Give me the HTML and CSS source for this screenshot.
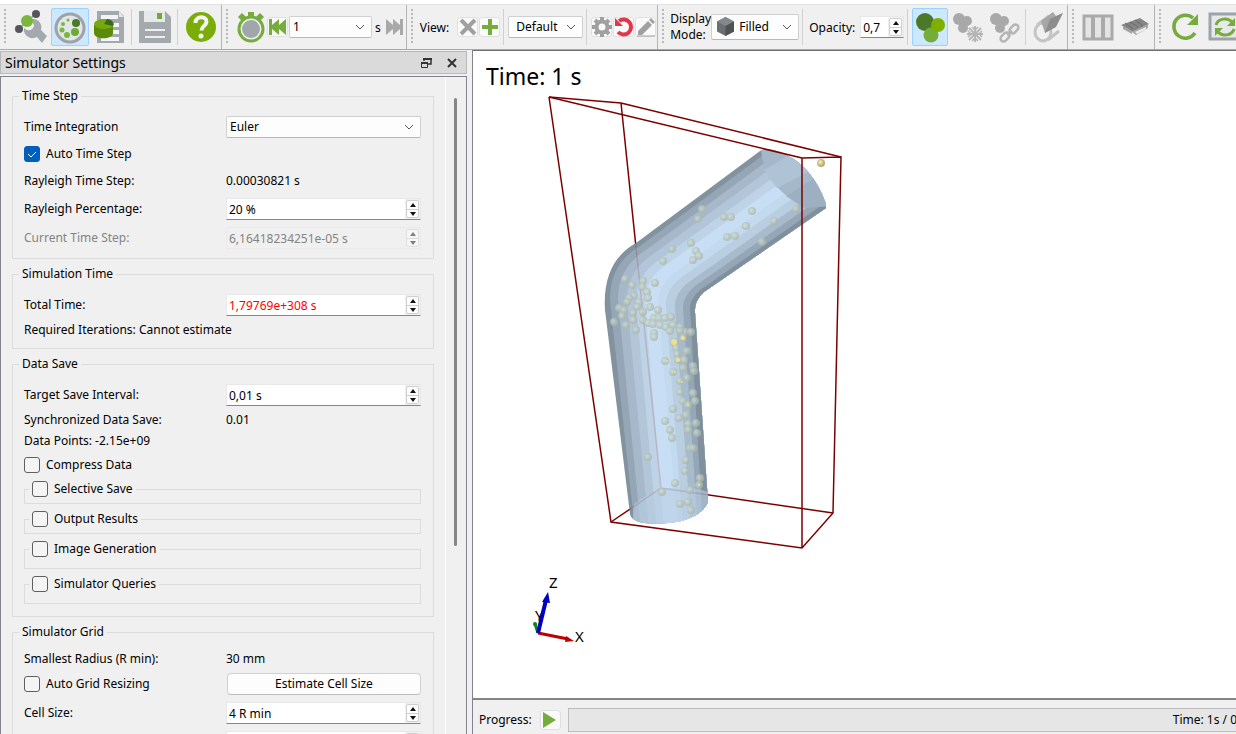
FILE: index.html
```html
<!DOCTYPE html>
<html lang="en">
<head>
    <meta charset="UTF-8">
    <meta name="viewport" content="width=device-width, initial-scale=1.0">
    <title>Simulator</title>
    <link rel="stylesheet" href="styles.css">
</head>
<body>
    <div class="menu-strip"></div>

    <header class="toolbars">
        <!-- Main tools -->
        <div class="toolbar main-tools">
            <span class="grip"></span>
            <button class="tool" aria-label="Setup">
                <svg width="34" height="34" viewBox="0 0 34 34">
                    <path d="M5 19l8-8 9-7" fill="none" stroke="#9aa0a4" stroke-width="1.5"/>
                    <path d="M10 18c-1 6 4 11 10 10l3-1 5 6 5-7-6-6c2-6-3-12-9-11l-1 1 3 5c0 4-4 6-7 5z" fill="#a3a9ad"/>
                    <circle cx="13" cy="11" r="6" fill="#7ab73c"/>
                    <circle cx="22" cy="4" r="4" fill="#55555c"/>
                    <circle cx="5" cy="19" r="4" fill="#55555c"/>
                </svg>
            </button>
            <button class="tool active" aria-label="Simulator">
                <svg width="34" height="34" viewBox="0 0 34 34">
                    <circle cx="17" cy="18" r="14" fill="#e3e6e8" stroke="#9da3a7" stroke-width="3"/>
                    <circle cx="23" cy="13" r="4" fill="#4a7a29"/>
                    <circle cx="22" cy="22" r="4" fill="#6dab35"/>
                    <circle cx="14" cy="25" r="3" fill="#7ab73c"/>
                    <circle cx="9" cy="20" r="2.5" fill="#7ab73c"/>
                    <circle cx="10" cy="14" r="2" fill="#7ab73c"/>
                    <circle cx="15" cy="10" r="1.5" fill="#7ab73c"/>
                </svg>
            </button>
            <button class="tool" aria-label="Data">
                <svg width="34" height="34" viewBox="0 0 34 34">
                    <path d="M5 1h22l5 5v27H5z" fill="#a3a9ad"/>
                    <path d="M27 1v6h5z" fill="#e4e6e7"/>
                    <path d="M9 7h17M21 15h6M21 22h6M9 29h18" stroke="#f4f4f4" stroke-width="4"/>
                    <path d="M2 15v8c0 7 19 7 19 0v-8z" fill="#5a8c0a"/>
                    <ellipse cx="12" cy="14" rx="10" ry="5" fill="#77a812"/>
                    <path d="M12 14l3-5c4 0 7 3 6 7z" fill="#3d661e"/>
                </svg>
            </button>
            <span class="sep"></span>
            <button class="tool" aria-label="Save">
                <svg width="34" height="34" viewBox="0 0 34 34">
                    <path d="M1 1h26l6 6v26H1z" fill="#a3a9ad"/>
                    <path d="M6 1h21v11H6z" fill="#e6e8e9"/>
                    <path d="M19 3h5v6h-5z" fill="#6dab35"/>
                    <path d="M7 20h20M7 27h20" stroke="#eee" stroke-width="2"/>
                </svg>
            </button>
            <span class="sep"></span>
            <button class="tool" aria-label="Help">
                <svg width="34" height="34" viewBox="0 0 34 34">
                    <circle cx="17" cy="17" r="15" fill="#7aad07"/>
                    <path d="M11.500 13c0-8 12-7 11-1-.5 4-5 4-5 8.500" fill="none" stroke="#f5f5f5" stroke-width="4"/>
                    <circle cx="17" cy="26" r="2.500" fill="#f5f5f5"/>
                </svg>
            </button>
        </div>

        <!-- Time -->
        <div class="toolbar">
            <span class="grip"></span>
            <svg class="timer" width="30" height="34" viewBox="0 0 30 34">
                <circle cx="15" cy="19" r="12" fill="#eee" stroke="#76ac3b" stroke-width="3"/>
                <circle cx="15" cy="19" r="9" fill="#a0a7ab"/>
                <path d="M12 2h6v5h-6zM2 7l4-4 4 4-4 4zM20 7l4-4 4 4-4 4z" fill="#76ac3b"/>
            </svg>
            <button class="mini" aria-label="First">
                <svg width="18" height="18" viewBox="0 0 18 18"><path d="M0 1h3v6l7-6v6l7-6v16l-7-6v6l-7-6v6H0z" fill="#76ac3b"/></svg>
            </button>
            <select class="combo time-combo" aria-label="Time"><option>1</option></select>
            <span class="unit">s</span>
            <button class="mini plain" aria-label="Last">
                <svg width="18" height="18" viewBox="0 0 18 18"><path d="M18 1h-3v6L8 1v6L1 1v16l7-6v6l7-6v6h3z" fill="#a9a9a9"/></svg>
            </button>
        </div>

        <!-- View -->
        <div class="toolbar">
            <span class="grip"></span>
            <label class="view-label" for="view">View:</label>
            <button class="mini" aria-label="Remove view">
                <svg width="18" height="18" viewBox="0 0 18 18"><path d="M2 2l14 14M16 2L2 16" stroke="#a0a0a0" stroke-width="4"/></svg>
            </button>
            <button class="mini" aria-label="Add view">
                <svg width="18" height="18" viewBox="0 0 18 18"><path d="M9 1v16M1 9h16" stroke="#76ac3b" stroke-width="4"/></svg>
            </button>
            <span class="sep"></span>
            <select class="combo view-combo" id="view"><option>Default</option></select>
            <span class="sep"></span>
            <button class="mini" aria-label="Configure">
                <svg width="20" height="20" viewBox="0 0 20 20">
                    <circle cx="10" cy="10" r="5.500" fill="none" stroke="#a0a0a0" stroke-width="4"/>
                    <path d="M10 0v4M10 16v4M0 10h4M16 10h4M3 3l3 3M14 14l3 3M3 17l3-3M14 6l3-3" stroke="#a0a0a0" stroke-width="4"/>
                </svg>
            </button>
            <button class="mini" aria-label="Reset">
                <svg width="20" height="20" viewBox="0 0 20 20"><path d="M5 4a7.500 7.500 0 1 1-1 11" fill="none" stroke="#e4364b" stroke-width="4"/><path d="M1 1v8h8z" fill="#e4364b"/></svg>
            </button>
            <button class="mini" aria-label="Edit">
                <svg width="20" height="20" viewBox="0 0 20 20"><path d="M2 14l10-10 4 4-10 10H2zM13 3l2-2 4 4-2 2z" fill="#a0a0a0"/><path d="M1 19h18" stroke="#a0a0a0"/></svg>
            </button>
        </div>

        <!-- Display -->
        <div class="toolbar">
            <span class="grip"></span>
            <label class="mode-label" for="mode">Display Mode:</label>
            <div class="mode-field">
                <svg width="17" height="19" viewBox="0 0 17 19">
                    <path d="M8.500 0L17 4.500v10L8.500 19 0 14.500v-10z" fill="#6b6f73"/>
                    <path d="M8.500 0L17 4.500 8.500 9 0 4.500z" fill="#85898c"/>
                    <path d="M17 4.500v10L8.500 19V9z" fill="#4f5255"/>
                </svg>
                <select class="combo mode-combo" id="mode"><option>Filled</option></select>
            </div>
            <span class="sep"></span>
            <label class="opacity-label" for="opacity">Opacity:</label>
            <div class="spin spin-small">
                <input id="opacity" type="text" value="0,7">
                <div class="arrows"><button aria-label="Up"></button><button aria-label="Down"></button></div>
            </div>
            <span class="sep"></span>
            <button class="tool active" aria-label="Show particles">
                <svg width="32" height="32" viewBox="0 0 32 32">
                    <circle cx="11" cy="11" r="9" fill="#4a7a29"/>
                    <circle cx="17" cy="24" r="7.500" fill="#76ac3b"/>
                    <circle cx="24" cy="14" r="7" fill="#7fb000"/>
                </svg>
            </button>
            <button class="tool" aria-label="Freeze particles">
                <svg width="32" height="32" viewBox="0 0 32 32">
                    <g fill="#a9a9a9"><circle cx="8" cy="8" r="6"/><circle cx="16" cy="10" r="5"/><circle cx="12" cy="17" r="5"/></g>
                    <path d="M24 15v16M16 23h16M18 17l12 12M30 17L18 29" stroke="#b5b5b5" stroke-width="2"/>
                    <path d="M21 16l3 3 3-3M21 30l3-3 3 3M17 20l3 3-3 3M31 20l-3 3 3 3" fill="none" stroke="#b5b5b5" stroke-width="1.500"/>
                </svg>
            </button>
            <button class="tool" aria-label="Link particles">
                <svg width="32" height="32" viewBox="0 0 32 32">
                    <g fill="#a9a9a9"><circle cx="8" cy="8" r="6"/><circle cx="16" cy="10" r="5"/><circle cx="12" cy="17" r="5"/></g>
                    <g fill="none" stroke="#b5b5b5" stroke-width="2.500">
                        <rect x="23" y="13" width="6" height="10" rx="3" transform="rotate(45 26 18)"/>
                        <rect x="14" y="21" width="6" height="10" rx="3" transform="rotate(45 17 26)"/>
                        <path d="M19 24l5-4"/>
                    </g>
                </svg>
            </button>
            <span class="sep"></span>
            <button class="tool" aria-label="Geometry">
                <svg width="32" height="32" viewBox="0 0 32 32">
                    <g fill="none" stroke="#c4c4c4" stroke-width="3">
                        <ellipse cx="11" cy="21" rx="8" ry="9"/>
                        <path d="M5 14l12-9M16 29l11-9"/>
                    </g>
                    <path d="M9 10l12-9 3 4 7-3-11 14-7 6z" fill="#a6a6a6"/>
                    <path d="M13 22l5-14 13-6-7 14z" fill="#8d8d8d"/>
                </svg>
            </button>
        </div>

        <!-- Windows -->
        <div class="toolbar">
            <span class="grip"></span>
            <button class="tool" aria-label="Columns">
                <svg width="32" height="32" viewBox="0 0 32 32">
                    <path d="M2 5h28v23H2z" fill="#e4e4e4" stroke="#aaa" stroke-width="3"/>
                    <path d="M11 4v24M21 4v24" stroke="#aaa" stroke-width="4"/>
                </svg>
            </button>
            <button class="tool" aria-label="Clip">
                <svg width="32" height="32" viewBox="0 0 32 32">
                    <path d="M2 14l19-7 9 6-17 8z" fill="#858585"/>
                    <path d="M4 18v-3l9 5v3zM13 21l16-8v4l-12 7z" fill="#a5a5a5"/>
                    <path d="M6 12l8 6M11 11l8 5M16 9l8 6" stroke="#696969"/>
                    <path d="M16 21l11-5v2l-9 5z" fill="#eee"/>
                </svg>
            </button>
        </div>

        <!-- Refresh -->
        <div class="toolbar">
            <span class="grip"></span>
            <button class="tool" aria-label="Refresh">
                <svg width="32" height="32" viewBox="0 0 32 32">
                    <path d="M24 7A11.500 11.500 0 1 0 26 22" fill="none" stroke="#76ac3b" stroke-width="3.500"/>
                    <path d="M29 3v11H18z" fill="#76ac3b"/>
                </svg>
            </button>
            <button class="tool" aria-label="Auto refresh">
                <svg width="34" height="32" viewBox="0 0 34 32">
                    <rect x="5" y="3" width="34" height="25" fill="#e6e8e9" stroke="#9da3a7" stroke-width="3"/>
                    <path d="M11 14c2-7 12-8 17-2M29 18c-2 7-12 8-17 2" fill="none" stroke="#76ac3b" stroke-width="3"/>
                    <path d="M30 7v8h-8zM10 25v-8h8z" fill="#76ac3b"/>
                </svg>
            </button>
        </div>
    </header>

    <main class="workspace">
        <aside class="dock">
            <div class="dock-title">
                <h1>Simulator Settings</h1>
                <button aria-label="Float">
                    <svg width="12" height="12" viewBox="0 0 12 12"><path d="M4 4V2h7v5H8" fill="none" stroke="#333" stroke-width="1.500"/><path d="M3 1h9v2H3zM1 5h7v2H1z" fill="#333"/><path d="M1.500 5.500h6v5h-6z" fill="none" stroke="#333"/></svg>
                </button>
                <button aria-label="Close">
                    <svg width="12" height="12" viewBox="0 0 12 12"><path d="M2 2l8 8M10 2l-8 8" stroke="#333" stroke-width="2"/></svg>
                </button>
            </div>

            <div class="dock-body">
                <form class="settings">
                    <fieldset class="group">
                        <legend>Time Step</legend>
                        <div class="row">
                            <label for="integration">Time Integration</label>
                            <select class="combo" id="integration"><option>Euler</option></select>
                        </div>
                        <div class="row">
                            <label class="check"><input type="checkbox" checked>Auto Time Step</label>
                        </div>
                        <div class="row">
                            <span>Rayleigh Time Step:</span>
                            <span>0.00030821 s</span>
                        </div>
                        <div class="row row-spin">
                            <label for="percentage">Rayleigh Percentage:</label>
                            <div class="spin">
                                <input id="percentage" type="text" value="20 %">
                                <div class="arrows"><button type="button" aria-label="Up"></button><button type="button" aria-label="Down"></button></div>
                            </div>
                        </div>
                        <div class="row row-spin disabled">
                            <label for="current">Current Time Step:</label>
                            <div class="spin">
                                <input id="current" type="text" value="6,16418234251e-05 s" disabled>
                                <div class="arrows"><button type="button" aria-label="Up" disabled></button><button type="button" aria-label="Down" disabled></button></div>
                            </div>
                        </div>
                    </fieldset>

                    <fieldset class="group">
                        <legend>Simulation Time</legend>
                        <div class="row row-spin">
                            <label for="total">Total Time:</label>
                            <div class="spin">
                                <input class="invalid" id="total" type="text" value="1,79769e+308 s">
                                <div class="arrows"><button type="button" aria-label="Up"></button><button type="button" aria-label="Down"></button></div>
                            </div>
                        </div>
                        <p>Required Iterations: Cannot estimate</p>
                    </fieldset>

                    <fieldset class="group">
                        <legend>Data Save</legend>
                        <div class="row row-spin">
                            <label for="interval">Target Save Interval:</label>
                            <div class="spin">
                                <input id="interval" type="text" value="0,01 s">
                                <div class="arrows"><button type="button" aria-label="Up"></button><button type="button" aria-label="Down"></button></div>
                            </div>
                        </div>
                        <div class="row row-text">
                            <span>Synchronized Data Save:</span>
                            <span>0.01</span>
                        </div>
                        <p>Data Points: -2.15e+09</p>
                        <div class="row">
                            <label class="check"><input type="checkbox">Compress Data</label>
                        </div>
                        <div class="subgroups">
                            <fieldset class="subgroup">
                                <legend><label class="check"><input type="checkbox">Selective Save</label></legend>
                            </fieldset>
                            <fieldset class="subgroup">
                                <legend><label class="check"><input type="checkbox">Output Results</label></legend>
                            </fieldset>
                            <fieldset class="subgroup tall">
                                <legend><label class="check"><input type="checkbox">Image Generation</label></legend>
                            </fieldset>
                            <fieldset class="subgroup tall">
                                <legend><label class="check"><input type="checkbox">Simulator Queries</label></legend>
                            </fieldset>
                        </div>
                    </fieldset>

                    <fieldset class="group">
                        <legend>Simulator Grid</legend>
                        <div class="row row-text">
                            <span>Smallest Radius (R min):</span>
                            <span>30 mm</span>
                        </div>
                        <div class="row row-spin">
                            <label class="check"><input type="checkbox">Auto Grid Resizing</label>
                            <button class="push" type="button">Estimate Cell Size</button>
                        </div>
                        <div class="row row-spin">
                            <label for="cell">Cell Size:</label>
                            <div class="spin">
                                <input id="cell" type="text" value="4 R min">
                                <div class="arrows"><button type="button" aria-label="Up"></button><button type="button" aria-label="Down"></button></div>
                            </div>
                        </div>
                        <div class="row row-spin">
                            <span></span>
                            <div class="spin">
                                <input type="text" aria-label="Cell size value">
                                <div class="arrows"><button type="button" aria-label="Up"></button><button type="button" aria-label="Down"></button></div>
                            </div>
                        </div>
                    </fieldset>
                </form>
                <div class="scrollbar"><div class="thumb"></div></div>
            </div>
        </aside>

        <section class="view">
            <div class="canvas">
                <span class="time">Time: 1 s</span>
                <svg class="scene" width="407" height="640" viewBox="473 52 407 640">
                    <defs>
                        <clipPath id="pipe">
                            <path d="M630 514L605 310Q602 262 636 243L760 151Q768 147 780 152Q812 164 826 204V208L704 292Q694 301 695 312L708 502Q700 520 668 523Q632 526 630 514Z"/>
                        </clipPath>
                        <radialGradient id="ball" cx="40%" cy="40%">
                            <stop offset="0" stop-color="#d3e0d6"/>
                            <stop offset="1" stop-color="#abb9ae"/>
                        </radialGradient>
                        <radialGradient id="gold" cx="40%" cy="40%">
                            <stop offset="0" stop-color="#f7f3c0"/>
                            <stop offset="1" stop-color="#b5ad72"/>
                        </radialGradient>
                        <circle id="p" r="4"/>
                    </defs>

                    <!-- Domain edges behind the pipe -->
                    <path class="edge" d="M621 103L661 488L611 522M661 488L833 513M549 97L621 103L841 157"/>

                    <!-- Pipe surface, one facet per path from left to right -->
                    <g clip-path="url(#pipe)">
                        <path fill="#82929f" d="M590 130H900V540H590Z"/>
                        <path fill="#95a6b6" d="M635 530L610 301Q609 264 640 246L766 153H900V540Z"/>
                        <path fill="#a6b8c9" d="M641 530L618 301Q617 268 646 250L771 158H900V540Z"/>
                        <path fill="#b3c6d9" d="M649 530L627 302Q626 272 652 255L777 164H900V540Z"/>
                        <path fill="#bfd3e7" d="M657 530L636 303Q635 276 659 260L784 170H900V540Z"/>
                        <path fill="#c8def4" d="M664 530L645 304Q644 280 666 265L790 176H900V540Z"/>
                        <path fill="#c3d9ee" d="M678 530L658 306Q657 284 677 271L801 182H900V540Z"/>
                        <path fill="#bacee2" d="M683 530L666 307Q665 289 682 277L806 189H900V540Z"/>
                        <path fill="#a8bbcd" d="M691 530L675 308Q674 293 689 282L812 195H900V540Z"/>
                        <path fill="#95a7b7" d="M698 530L683 309Q682 297 695 286L818 200H900V540Z"/>
                        <path fill="#81909d" d="M703 530L690 309Q689 300 700 290L822 205H900V540Z"/>
                        <path fill="#a5b8ca" d="M761 150Q763 174 780 190Q798 208 826 206V140H762Z"/>
                        <path fill="#afc3d6" d="M764 170L795 152L812 170L777 188Z"/>
                        <path fill="#9db0c2" d="M786 196L820 175L830 206L804 208Z"/>
                        <path fill="#b9cfe4" opacity=".6" d="M634 504Q668 478 708 492V530H632Z"/>
                        <path class="edge faint" d="M621 103L661 488L611 522M661 488L833 513"/>
                    </g>

                    <!-- Particles -->
                    <g fill="url(#ball)" opacity=".75">
                        <use href="#p" x="702" y="209"/><use href="#p" x="698" y="219"/><use href="#p" x="724" y="217"/><use href="#p" x="731" y="217"/>
                        <use href="#p" x="752" y="211"/><use href="#p" x="746" y="226"/><use href="#p" x="796" y="209"/><use href="#p" x="774" y="221"/>
                        <use href="#p" x="727" y="237"/><use href="#p" x="735" y="236"/><use href="#p" x="762" y="242"/><use href="#p" x="691" y="243"/>
                        <use href="#p" x="672" y="249"/><use href="#p" x="696" y="251"/><use href="#p" x="699" y="256"/><use href="#p" x="693" y="260"/>
                        <use href="#p" x="663" y="261"/><use href="#p" x="625" y="279"/><use href="#p" x="632" y="285"/><use href="#p" x="643" y="281"/>
                        <use href="#p" x="655" y="283"/><use href="#p" x="642" y="287"/><use href="#p" x="647" y="292"/><use href="#p" x="648" y="298"/>
                        <use href="#p" x="634" y="296"/><use href="#p" x="629" y="298"/><use href="#p" x="627" y="302"/><use href="#p" x="639" y="302"/>
                        <use href="#p" x="619" y="308"/><use href="#p" x="624" y="310"/><use href="#p" x="637" y="307"/><use href="#p" x="650" y="307"/>
                        <use href="#p" x="658" y="310"/><use href="#p" x="622" y="316"/><use href="#p" x="633" y="313"/><use href="#p" x="643" y="312"/>
                        <use href="#p" x="654" y="318"/><use href="#p" x="659" y="318"/><use href="#p" x="665" y="318"/><use href="#p" x="671" y="317"/>
                        <use href="#p" x="614" y="322"/><use href="#p" x="633" y="320"/><use href="#p" x="643" y="320"/><use href="#p" x="648" y="323"/>
                        <use href="#p" x="653" y="324"/><use href="#p" x="660" y="325"/><use href="#p" x="673" y="325"/><use href="#p" x="626" y="325"/>
                        <use href="#p" x="666" y="327"/><use href="#p" x="680" y="327"/><use href="#p" x="636" y="330"/><use href="#p" x="654" y="333"/>
                        <use href="#p" x="654" y="337"/><use href="#p" x="670" y="331"/><use href="#p" x="685" y="332"/><use href="#p" x="691" y="332"/>
                        <use href="#p" x="680" y="331"/><use href="#p" x="674" y="342"/><use href="#p" x="683" y="338"/><use href="#p" x="676" y="348"/>
                        <use href="#p" x="687" y="351"/><use href="#p" x="677" y="354"/><use href="#p" x="665" y="361"/><use href="#p" x="678" y="360"/>
                        <use href="#p" x="684" y="360"/><use href="#p" x="683" y="368"/><use href="#p" x="693" y="366"/><use href="#p" x="673" y="372"/>
                        <use href="#p" x="694" y="371"/><use href="#p" x="687" y="378"/><use href="#p" x="680" y="381"/><use href="#p" x="680" y="392"/>
                        <use href="#p" x="693" y="393"/><use href="#p" x="683" y="401"/><use href="#p" x="695" y="401"/><use href="#p" x="688" y="405"/>
                        <use href="#p" x="673" y="409"/><use href="#p" x="686" y="415"/><use href="#p" x="679" y="418"/><use href="#p" x="665" y="421"/>
                        <use href="#p" x="688" y="424"/><use href="#p" x="696" y="423"/><use href="#p" x="688" y="430"/><use href="#p" x="670" y="430"/>
                        <use href="#p" x="697" y="433"/><use href="#p" x="672" y="438"/><use href="#p" x="690" y="448"/><use href="#p" x="693" y="448"/>
                        <use href="#p" x="648" y="457"/><use href="#p" x="686" y="460"/><use href="#p" x="685" y="471"/><use href="#p" x="700" y="478"/>
                        <use href="#p" x="675" y="483"/><use href="#p" x="699" y="485"/><use href="#p" x="690" y="490"/><use href="#p" x="662" y="492"/>
                        <use href="#p" x="680" y="504"/><use href="#p" x="688" y="502"/><use href="#p" x="691" y="510"/>
                    </g>
                    <use href="#p" x="821" y="163" fill="url(#gold)"/>
                    <g fill="#efdf86">
                        <circle cx="674" cy="342" r="3"/><circle cx="683" cy="338" r="2"/><circle cx="678" cy="360" r="2"/>
                        <circle cx="667" cy="361" r="1"/><circle cx="675" cy="372" r="1"/><circle cx="682" cy="382" r="1"/>
                        <circle cx="688" cy="405" r="1"/><circle cx="699" cy="485" r="1"/>
                    </g>

                    <!-- Domain edges in front -->
                    <path class="edge" d="M549 97L802 158L841 157L833 513L802 548L611 522L549 97M802 158V548"/>

                    <!-- Axis triad -->
                    <text x="535" y="621">Y</text>
                    <path d="M538 633L535 624" stroke="#0a8a1e" stroke-width="3"/>
                    <circle cx="535" cy="624" r="2" fill="#0a8a1e"/>
                    <path d="M538 633L568 639" stroke="#c00000" stroke-width="3"/>
                    <path d="M566 636L574 641L565 642Z" fill="#c00000"/>
                    <path d="M538 633L546 600" stroke="#0000c4" stroke-width="4"/>
                    <path d="M548 592L550 603L542 602Z" fill="#0000c4"/>
                    <text x="549" y="588">Z</text>
                    <text x="575" y="642">X</text>
                </svg>
            </div>

            <footer class="progress-row">
                <span>Progress:</span>
                <button class="mini play" aria-label="Play">
                    <svg width="18" height="18" viewBox="0 0 18 18"><path d="M2 1l13 8-13 8z" fill="#76ac3b"/></svg>
                </button>
                <div class="progress" role="progressbar" aria-label="Progress"><span>Time: 1s / 0</span></div>
            </footer>
        </section>
    </main>
</body>
</html>
```
FILE: styles.css
```css
* {
    box-sizing: border-box;
}

body {
    margin: 0;
    height: 100vh;
    display: flex;
    flex-direction: column;
    overflow: hidden;
    background-color: #f0f0f0;
    font-family: "Noto Sans", "DejaVu Sans Condensed", sans-serif;
    font-size: 12px;
    line-height: 16px;
    color: #000;
}

button, input, select {
    font: inherit;
    color: inherit;
    margin: 0;
}

button {
    padding: 0;
    border: none;
    background: none;
    display: flex;
    align-items: center;
    justify-content: center;
    flex: none;
}

svg {
    flex: none;
    display: block;
}

p {
    margin: 0;
}

.menu-strip {
    height: 5px;
    flex: none;
    background-color: #fff;
    border-bottom: 1px solid #e2e2e2;
}

/* Toolbars */
.toolbars {
    display: flex;
    flex: none;
    height: 45px;
    border-bottom: 1px solid #a8a8a8;
    white-space: nowrap;
}

.toolbar {
    display: flex;
    align-items: center;
    flex: none;
    gap: 1px;
    padding: 0 1px 0 4px;
    border-right: 1px solid #b4b4b4;
}

.toolbar:last-child {
    border-right: none;
}

.grip {
    width: 2px;
    height: 36px;
    margin-right: 5px;
    background: repeating-linear-gradient(#b8b8b8 0 2px, transparent 2px 4px);
}

.sep {
    width: 1px;
    height: 36px;
    margin: 0 3px 0 2px;
    background-color: #d0d0d0;
}

.tool {
    width: 36px;
    height: 38px;
}

.main-tools .tool {
    width: 38px;
}

.tool.active {
    background-color: #cce8ff;
    border: 1px solid #99d1ff;
    border-radius: 2px;
}

.mini {
    width: 21px;
    height: 20px;
    background-color: #fafafa;
    border: 1px solid #e0e0e0;
    border-radius: 3px;
}

.mini.plain {
    background: none;
    border-color: transparent;
}

.timer {
    margin-left: 2px;
}

.unit {
    padding: 2px 2px 0;
}

.combo {
    appearance: none;
    width: 100%;
    height: 22px;
    padding: 0 20px 0 3px;
    border: 1px solid #d0d0d0;
    border-bottom-color: #b8b8b8;
    border-radius: 2px;
    background: #fdfdfd url("data:image/svg+xml,%3Csvg xmlns='http://www.w3.org/2000/svg' width='10' height='6'%3E%3Cpath d='M1 1l4 4 4-4' fill='none' stroke='%23555'/%3E%3C/svg%3E") no-repeat right 6px center;
}

.time-combo {
    width: 83px;
}

.view-label {
    padding: 2px 7px 0 1px;
}

.view-combo {
    width: 75px;
    padding-left: 7px;
}

.mode-label {
    width: 40px;
    white-space: normal;
}

.mode-field {
    position: relative;
    width: 88px;
}

.mode-field svg {
    position: absolute;
    left: 6px;
    top: 3px;
}

.mode-combo {
    height: 26px;
    padding-left: 27px;
}

.opacity-label {
    padding: 2px 4px 0 2px;
}

/* Spin boxes */
.spin {
    display: flex;
    align-items: center;
    width: 100%;
    height: 22px;
    padding-right: 1px;
    border: 1px solid #e8e8e8;
    border-bottom-color: #868686;
}

.spin input {
    flex: 1;
    min-width: 0;
    height: 100%;
    padding: 0 2px;
    border: none;
    background-color: #fff;
}

.spin-small {
    width: 44px;
}

.arrows {
    flex: none;
    width: 13px;
    height: 18px;
    margin-left: 1px;
    border: 1px solid #d0d0d0;
    border-radius: 2px;
    background-color: #fdfdfd;
}

.arrows button {
    width: 100%;
    height: 8px;
}

.arrows button::after {
    content: "";
    border: 3px solid transparent;
    border-top: none;
    border-bottom: 4px solid #111;
}

.arrows button:last-child {
    border-top: 1px solid #d0d0d0;
}

.arrows button:last-child::after {
    border-top: 4px solid #111;
    border-bottom: none;
}

/* Settings dock */
.workspace {
    display: flex;
    flex: 1;
    min-height: 0;
}

.dock {
    display: flex;
    flex-direction: column;
    flex: none;
    width: 467px;
    margin-right: 5px;
    padding-top: 1px;
}

.dock-title {
    display: flex;
    align-items: center;
    gap: 14px;
    height: 23px;
    flex: none;
    padding: 0 8px 0 4px;
    margin-bottom: 2px;
    border: 1px solid #b8b8b8;
    background-color: #dadada;
}

.dock-title h1 {
    flex: 1;
    margin: 0;
    font-size: 14px;
    font-weight: normal;
    line-height: 20px;
}

.dock-body {
    display: flex;
    flex: 1;
    min-height: 0;
    overflow: hidden;
    border: 1px solid #83838f;
    border-bottom: none;
}

.settings {
    display: flex;
    flex-direction: column;
    gap: 7px;
    flex: 1;
    padding: 11px 11px 0;
    border-right: 1px solid #fff;
}

.scrollbar {
    width: 20px;
    padding: 21px 8px 0;
}

.thumb {
    width: 3px;
    height: 448px;
    border-radius: 2px;
    background-color: #868686;
}

.group, .subgroup {
    min-width: 0;
    margin: 0;
    border: 1px solid #dcdcdc;
}

.group {
    display: flex;
    flex-direction: column;
    gap: 5px;
    flex: none;
    padding: 11px 12px 10px 11px;
}

.group:first-child {
    padding-top: 12px;
    padding-bottom: 8px;
}

legend {
    height: 16px;
    padding: 0 3px;
    margin-left: -5px;
}

.row {
    display: grid;
    grid-template-columns: 202px 1fr;
    align-items: center;
    height: 22px;
}

.row-spin {
    height: 24px;
}

.row-text {
    height: 16px;
}

.check {
    display: flex;
    align-items: center;
    gap: 6px;
}

.check input {
    appearance: none;
    width: 16px;
    height: 16px;
    border: 1px solid #606060;
    border-radius: 3px;
    background-color: #f5f5f5;
}

.check input:checked {
    border-color: #005fb8;
    background: #005fb8 url("data:image/svg+xml,%3Csvg xmlns='http://www.w3.org/2000/svg' width='10' height='8'%3E%3Cpath d='M1 4l3 3 5-5' fill='none' stroke='%23fff'/%3E%3C/svg%3E") no-repeat center;
}

.disabled {
    color: #848484;
}

.disabled .spin {
    border-color: #eaeaea;
}

.disabled .spin input {
    background-color: #f0f0f0;
}

.disabled .arrows {
    opacity: 0.5;
}

.invalid {
    color: #f00;
}

.subgroups {
    display: flex;
    flex-direction: column;
    gap: 7px;
    padding-bottom: 2px;
}

.subgroup {
    padding: 6px 0 0;
}

.subgroup.tall {
    padding-top: 11px;
}

.subgroup legend {
    margin-left: 4px;
}

.push {
    height: 22px;
    margin-left: 1px;
    border: 1px solid #d0d0d0;
    border-bottom-color: #bcbcbc;
    border-radius: 4px;
    background-color: #fdfdfd;
}

/* 3D view */
.view {
    display: flex;
    flex-direction: column;
    flex: 1;
    min-width: 0;
    border-left: 1px solid #83838f;
}

.canvas {
    position: relative;
    flex: 1;
    min-height: 0;
    overflow: hidden;
    padding-top: 1px;
    background-color: #fff;
    border-top: 1px solid #707070;
    border-bottom: 2px solid #83838a;
}

.time {
    position: absolute;
    left: 13px;
    top: 13px;
    font-size: 23px;
    line-height: 24px;
}

.edge {
    fill: none;
    stroke: #7d0000;
    stroke-width: 1.5;
}

.faint {
    opacity: 0.15;
}

.scene text {
    font-size: 15px;
}

.progress-row {
    display: flex;
    align-items: center;
    flex: none;
    height: 34px;
    padding: 6px 0 0 6px;
}

.play {
    margin: 0 7px 0 8px;
}

.progress {
    display: flex;
    justify-content: flex-end;
    align-items: center;
    flex: 1;
    height: 24px;
    margin-right: -6px;
    padding-right: 4px;
    border: 1px solid #bcbcbc;
    background-color: #e6e6e6;
    white-space: nowrap;
}
```
